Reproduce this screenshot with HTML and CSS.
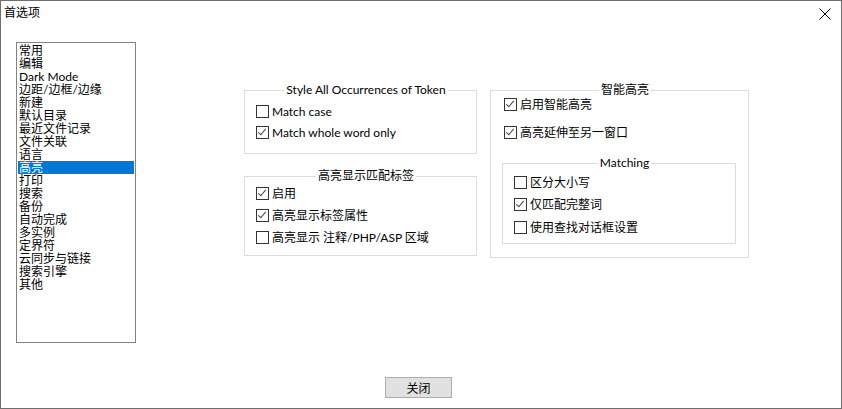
FILE: index.html
```html
<!DOCTYPE html>
<html lang="zh-CN">
<head>
    <meta charset="UTF-8">
    <title>首选项</title>
    <link rel="stylesheet" href="styles.css">
</head>
<body>
    <div class="window">
        <div class="titlebar">
            <span class="title">首选项</span>
            <svg class="close" width="12" height="12" viewBox="0 0 12 12">
                <path d="M0.5 0.5 L11.5 11.5 M11.5 0.5 L0.5 11.5" stroke="#000" stroke-width="1" fill="none"/>
            </svg>
        </div>
        <div class="main">
            <ul class="listbox">
                <li>常用</li>
                <li>编辑</li>
                <li>Dark Mode</li>
                <li>边距/边框/边缘</li>
                <li>新建</li>
                <li>默认目录</li>
                <li>最近文件记录</li>
                <li>文件关联</li>
                <li>语言</li>
                <li class="selected">高亮</li>
                <li>打印</li>
                <li>搜索</li>
                <li>备份</li>
                <li>自动完成</li>
                <li>多实例</li>
                <li>定界符</li>
                <li>云同步与链接</li>
                <li>搜索引擎</li>
                <li>其他</li>
            </ul>
            <div class="panel">
                <div class="column left-col">
                    <fieldset class="group group-token">
                        <legend>Style All Occurrences of Token</legend>
                        <label class="check"><span class="cb"></span>Match case</label>
                        <label class="check"><span class="cb on"></span>Match whole word only</label>
                    </fieldset>
                    <fieldset class="group group-tags">
                        <legend>高亮显示匹配标签</legend>
                        <label class="check"><span class="cb on"></span>启用</label>
                        <label class="check"><span class="cb on"></span>高亮显示标签属性</label>
                        <label class="check"><span class="cb"></span>高亮显示 注释/PHP/ASP 区域</label>
                    </fieldset>
                </div>
                <div class="column right-col">
                    <fieldset class="group group-smart">
                        <legend>智能高亮</legend>
                        <label class="check"><span class="cb on"></span>启用智能高亮</label>
                        <label class="check"><span class="cb on"></span>高亮延伸至另一窗口</label>
                        <fieldset class="group group-matching">
                            <legend>Matching</legend>
                            <label class="check"><span class="cb"></span>区分大小写</label>
                            <label class="check"><span class="cb on"></span>仅匹配完整词</label>
                            <label class="check"><span class="cb"></span>使用查找对话框设置</label>
                        </fieldset>
                    </fieldset>
                </div>
            </div>
        </div>
        <div class="footer">
            <button class="btn">关闭</button>
        </div>
    </div>
</body>
</html>
```

FILE: styles.css
```css
body {
    margin: 0;
    font-family: Lato, "Noto Sans CJK SC", sans-serif;
    font-size: 12px;
    color: #000;
    background: #fff;
}
.window {
    width: 842px;
    height: 409px;
    box-sizing: border-box;
    border: 1px solid #6e6e6e;
    display: flex;
    flex-direction: column;
    background: #fff;
}
.titlebar {
    height: 24px;
    display: flex;
    align-items: center;
    justify-content: space-between;
    padding: 0 10px 0 3px;
}
.title {
    font-size: 12px;
    line-height: 14px;
}
.close {
    display: block;
    margin-top: 1px;
}
.main {
    flex: 1;
    display: flex;
    align-items: flex-start;
    padding-left: 15px;
}
.listbox {
    list-style: none;
    margin: 17px 0 0 0;
    padding: 1px 1px;
    width: 120px;
    height: 301px;
    box-sizing: border-box;
    border: 1px solid #828282;
}
.listbox li {
    height: 13px;
    line-height: 13px;
    padding-left: 1px;
    white-space: nowrap;
}
.listbox li.selected {
    background: #0078d7;
    color: #fff;
}
.panel {
    display: flex;
    margin: 58px 0 0 108px;
    gap: 13px;
}
.column {
    display: flex;
    flex-direction: column;
}
.group {
    margin: 0;
    border: 1px solid #dcdcdc;
    padding: 0 0 0 11px;
    min-width: 0;
}
.group legend {
    margin: 0 auto;
    padding: 0 2px;
    line-height: 14px;
    font-size: 12px;
}
.group-token {
    width: 233px;
    height: 71px;
    box-sizing: border-box;
    padding-top: 8px;
}
.group-tags {
    width: 233px;
    height: 87px;
    box-sizing: border-box;
    margin-top: 15px;
    padding-top: 4px;
}
.group-smart {
    width: 259px;
    height: 175px;
    box-sizing: border-box;
    padding-top: 1px;
}
.group-smart > .check {
    margin-left: 2px;
}
.group-matching {
    width: 234px;
    height: 88px;
    box-sizing: border-box;
    margin-top: 17px;
    padding-top: 6px;
}
.check {
    display: flex;
    align-items: center;
    height: 13px;
    line-height: 13px;
    white-space: nowrap;
}
.group-token .check + .check {
    margin-top: 8px;
}
.group-tags .check + .check {
    margin-top: 9px;
}
.group-smart > .check + .check {
    margin-top: 15px;
}
.group-matching .check + .check {
    margin-top: 9px;
}
.group-matching .check:last-child {
    margin-top: 10px;
}
.cb {
    width: 13px;
    height: 13px;
    box-sizing: border-box;
    border: 1px solid #333;
    background: #fff;
    margin-right: 3px;
    flex: none;
    position: relative;
}
.cb.on::after {
    content: "";
    position: absolute;
    left: 3px;
    top: 0px;
    width: 3px;
    height: 7px;
    border: solid #444;
    border-width: 0 1px 1px 0;
    transform: rotate(40deg);
}
.footer {
    padding: 0 0 10px 384px;
}
.btn {
    display: block;
    width: 67px;
    height: 21px;
    padding: 0;
    border: 1px solid #adadad;
    background: #e1e1e1;
    font-family: "Noto Sans CJK SC", sans-serif;
    font-size: 12px;
    line-height: 17px;
    color: #000;
}
```
